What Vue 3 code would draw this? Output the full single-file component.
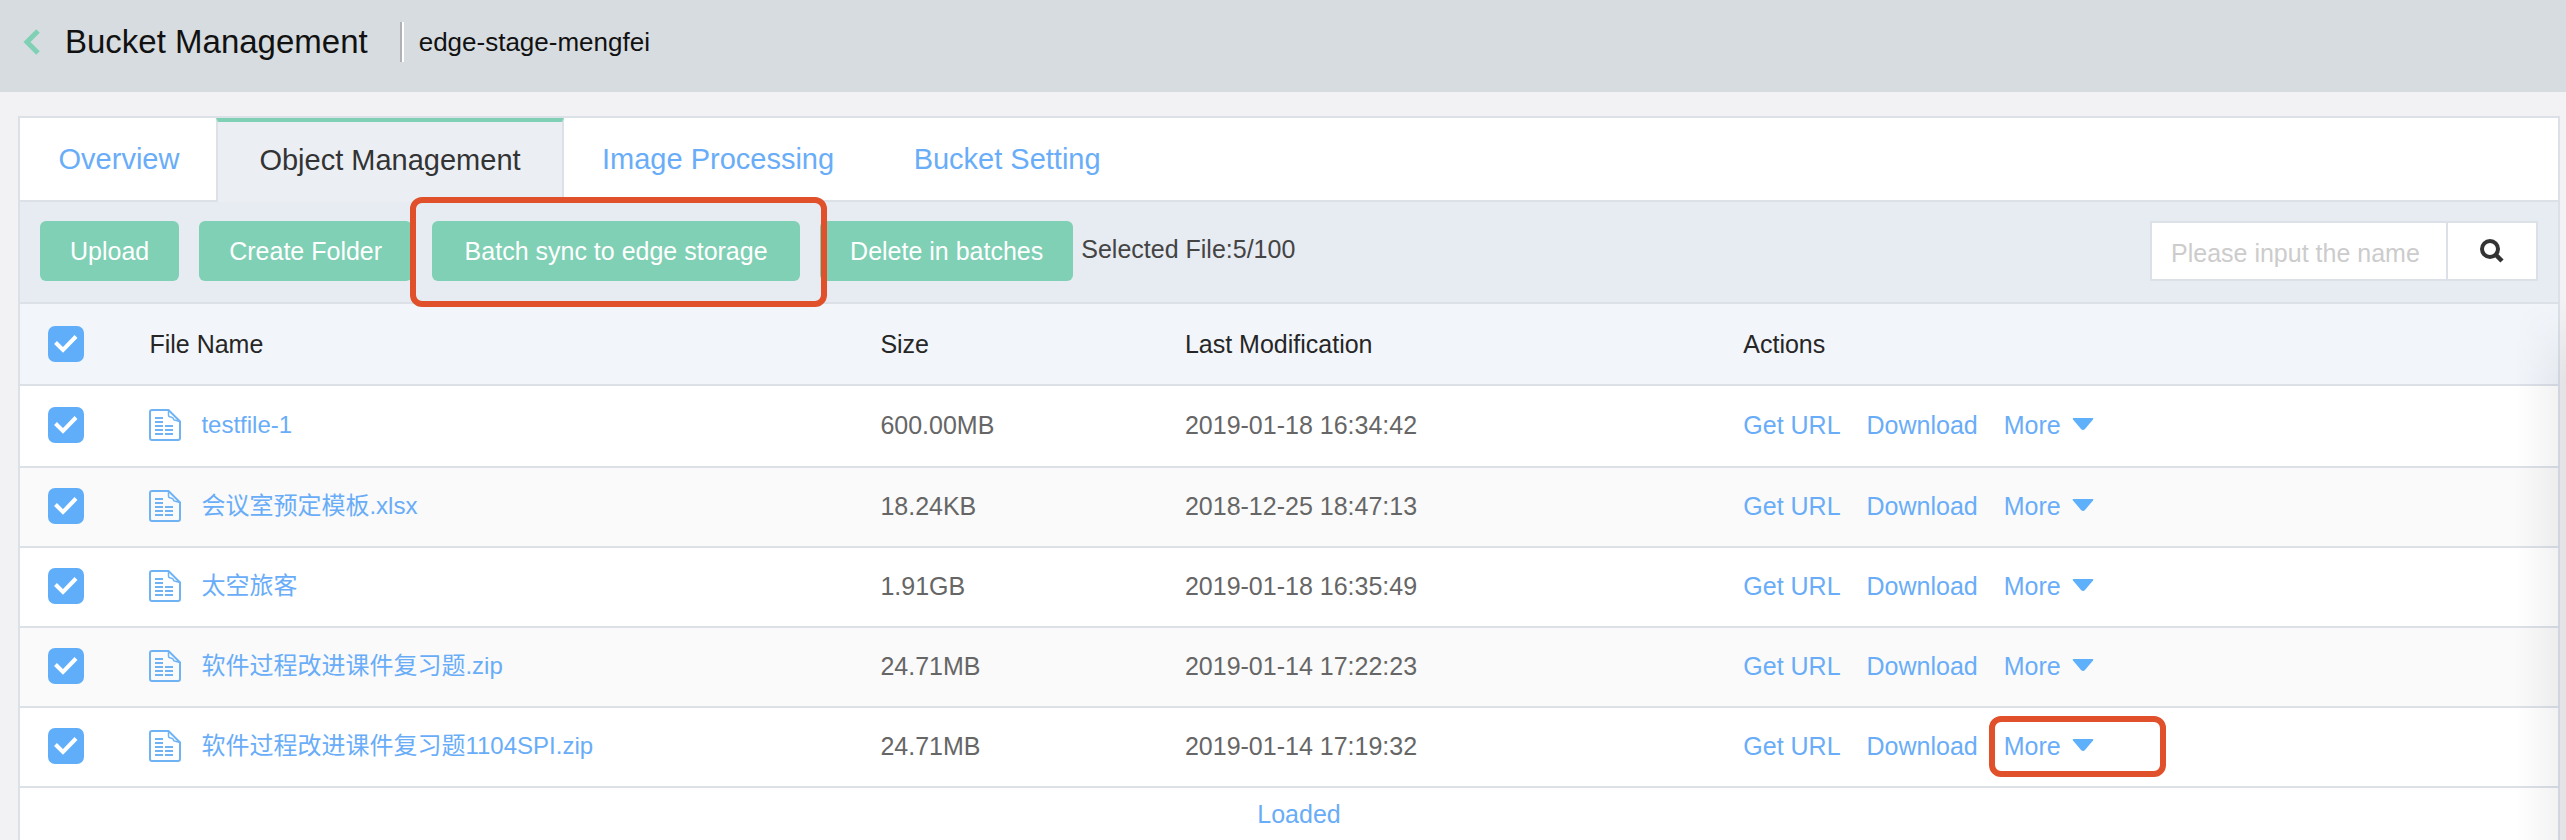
<script setup>
import { ref, computed } from 'vue'

const tabs = [
  { label: 'Overview', size: 'short' },
  { label: 'Object Management', size: 'long', active: true },
  { label: 'Image Processing', size: 'medium' },
  { label: 'Bucket Setting', size: 'medium' }
]

const files = ref([
  { name: 'testfile-1', size: '600.00MB', modified: '2019-01-18 16:34:42', checked: true },
  { name: '会议室预定模板.xlsx', size: '18.24KB', modified: '2018-12-25 18:47:13', checked: true },
  { name: '太空旅客', size: '1.91GB', modified: '2019-01-18 16:35:49', checked: true },
  { name: '软件过程改进课件复习题.zip', size: '24.71MB', modified: '2019-01-14 17:22:23', checked: true },
  { name: '软件过程改进课件复习题1104SPI.zip', size: '24.71MB', modified: '2019-01-14 17:19:32', checked: true, marked: true }
])

const keyword = ref('')
const selectedCount = computed(() => files.value.filter((f) => f.checked).length)
const allChecked = computed({
  get: () => files.value.every((f) => f.checked),
  set: (value) => files.value.forEach((f) => { f.checked = value })
})
</script>

<template>
  <div class="page">
    <header class="header">
      <a class="back" href="#" aria-label="Back">
        <svg width="18" height="26" viewBox="0 0 18 26" fill="none">
          <path d="M15 2 L4 13 L15 24" stroke="#7fd0b5" stroke-width="5" />
        </svg>
      </a>
      <h1 class="title">Bucket Management</h1>
      <span class="divider"></span>
      <span class="bucket">edge-stage-mengfei</span>
    </header>

    <main class="panel">
      <nav class="tabs">
        <a
          v-for="tab in tabs"
          :key="tab.label"
          href="#"
          class="tab"
          :class="[tab.size, { active: tab.active }]"
        >{{ tab.label }}</a>
      </nav>

      <div class="toolbar">
        <button type="button" class="btn">Upload</button>
        <button type="button" class="btn">Create Folder</button>
        <div class="marked-action">
          <button type="button" class="btn wide">Batch sync to edge storage</button>
          <span class="mark mark-button"></span>
        </div>
        <button type="button" class="btn">Delete in batches</button>
        <span class="selected">Selected File:{{ selectedCount }}/100</span>
        <form class="search" @submit.prevent>
          <input v-model="keyword" type="text" aria-label="File name" placeholder="Please input the name" />
          <button type="submit" aria-label="Search">
            <svg width="24" height="24" viewBox="0 0 24 24" fill="none" stroke="#333">
              <circle cx="10" cy="10" r="8" stroke-width="4" />
              <path d="M15.5 15.5 L22 22" stroke-width="4.5" />
            </svg>
          </button>
        </form>
      </div>

      <table class="files">
        <colgroup>
          <col class="col-check" />
          <col class="col-name" />
          <col class="col-size" />
          <col class="col-date" />
          <col />
        </colgroup>
        <thead>
          <tr>
            <th class="check-cell">
              <label class="check">
                <input v-model="allChecked" type="checkbox" aria-label="Select all files" />
                <svg viewBox="0 0 36 36" fill="none"><path d="M7.5 16.5 L15 24 L28 10.5" stroke="#fff" stroke-width="4" /></svg>
              </label>
            </th>
            <th>File Name</th>
            <th>Size</th>
            <th>Last Modification</th>
            <th>Actions</th>
          </tr>
        </thead>
        <tbody>
          <tr v-for="file in files" :key="file.name">
            <td class="check-cell">
              <label class="check">
                <input v-model="file.checked" type="checkbox" :aria-label="'Select ' + file.name" />
                <svg viewBox="0 0 36 36" fill="none"><path d="M7.5 16.5 L15 24 L28 10.5" stroke="#fff" stroke-width="4" /></svg>
              </label>
            </td>
            <td>
              <a class="file" href="#">
                <svg width="32" height="32" viewBox="0 0 32 32" fill="none" stroke="#6fb3f5" stroke-width="2">
                  <path d="M19.5 1 H3 Q1 1 1 3 V29 Q1 31 3 31 H29 Q31 31 31 29 V12.5 Z" />
                  <path d="M19.5 1.5 V6 Q19.5 8 22 8 Q24.5 8.5 25 11 L31 12.5" stroke-width="1.5" />
                  <path d="M6 9 H14 M6 13 H14 M6 17 H14 M6 21 H14 M6 25 H14 M16 17 H24 M16 21 H24 M16 25 H24" />
                </svg>
                <span>{{ file.name }}</span>
              </a>
            </td>
            <td>{{ file.size }}</td>
            <td>{{ file.modified }}</td>
            <td>
              <div class="actions">
                <a href="#">Get URL</a>
                <a href="#">Download</a>
                <a href="#" class="more">
                  More
                  <svg width="22" height="14" viewBox="0 0 22 14">
                    <path d="M1.5 0 H20.5 Q22 0 21 1.5 L13 11 Q11 13 9 11 L1 1.5 Q0 0 1.5 0 Z" fill="#5fb0fb" />
                  </svg>
                  <span v-if="file.marked" class="mark mark-more"></span>
                </a>
              </div>
            </td>
          </tr>
        </tbody>
      </table>

      <p class="loaded">Loaded</p>
    </main>
    <div class="edge-shade"></div>
  </div>
</template>

<style>
body {
  margin: 0;
  background: #f2f2f4;
}
</style>

<style scoped>
.page {
  position: relative;
  display: flex;
  flex-direction: column;
  min-height: 100vh;
  overflow: hidden;
  font-family: "Liberation Sans", "Noto Sans CJK SC", sans-serif;
  font-size: 25px;
  line-height: 36px;
  color: #666;
}

.page * {
  box-sizing: border-box;
}

a {
  color: #69adf8;
  text-decoration: none;
}

button,
input {
  font: inherit;
}

.header {
  display: flex;
  align-items: center;
  height: 92px;
  padding: 0 23px 8px;
  background: #d7dce0;
  color: #111;
}

.back {
  display: flex;
  margin-right: 24px;
}

.title {
  margin: 0;
  font-size: 33px;
  font-weight: 400;
}

.divider {
  width: 4px;
  height: 40px;
  margin: 0 15px 0 32px;
  border-left: 2px solid #aeb2b6;
  background: #fff;
}

.bucket {
  font-size: 26px;
}

.panel {
  flex: 1;
  margin: 24px 6px 0 18px;
  border: 2px solid #dce1e8;
  border-bottom: 0;
  background: #fff;
}

.tabs {
  display: flex;
  height: 84px;
  border-bottom: 2px solid #dce1e8;
  font-size: 29px;
}

.tab {
  display: flex;
  align-items: center;
  justify-content: center;
  padding: 0 38px;
}

.tab.short {
  width: 196px;
  padding: 0 36px 0 38px;
}

.tab.long {
  width: 348px;
  padding-bottom: 4px;
}

.tab.medium {
  min-width: 270px;
}

.tab.active {
  height: 84px;
  border: 2px solid #dce1e8;
  border-top: 4px solid #7fd0b5;
  border-bottom: 0;
  background: #ebeff4;
  color: #333;
}

.toolbar {
  display: flex;
  align-items: center;
  gap: 20px;
  height: 102px;
  padding: 0 20px 2px;
  border-bottom: 2px solid #dce1e8;
  background: #e7ebf2;
}

.btn {
  height: 60px;
  padding: 0 30px;
  border: 0;
  border-radius: 6px;
  background: #7fd0b5;
  color: #fff;
  white-space: nowrap;
}

.btn.wide {
  min-width: 368px;
}

.marked-action {
  position: relative;
  display: flex;
}

.mark {
  position: absolute;
  border: 6px solid #e0502b;
  border-radius: 12px;
  pointer-events: none;
}

.mark-button {
  inset: -24px -27px -26px -22px;
}

.selected {
  margin-left: -12px;
  padding-bottom: 4px;
  color: #444;
  white-space: nowrap;
}

.search {
  display: flex;
  width: 388px;
  height: 60px;
  margin-left: auto;
  border: 2px solid #dce1e8;
  background: #fff;
}

.search input {
  flex: 1;
  min-width: 0;
  padding: 4px 0 0 19px;
  border: 0;
  outline: 0;
  background: transparent;
  color: #333;
}

.search input::placeholder {
  color: #ccc;
  opacity: 1;
}

.search button {
  display: flex;
  align-items: center;
  justify-content: center;
  width: 90px;
  padding: 0;
  border: 0;
  border-left: 2px solid #dce1e8;
  background: #fff;
}

.files {
  width: 100%;
  border-collapse: separate;
  border-spacing: 0;
  table-layout: fixed;
}

.col-check {
  width: 5.1%;
}

.col-name {
  width: 28.8%;
}

.col-size {
  width: 12%;
}

.col-date {
  width: 22%;
}

.files th,
.files td {
  height: 80px;
  padding: 0 0 2px;
  border-bottom: 2px solid #dce1e8;
  text-align: left;
  vertical-align: middle;
}

.files th,
.files tbody tr:first-child td {
  height: 82px;
}

.files th {
  padding: 0;
  background: #f2f5fa;
  color: #262626;
  font-weight: 400;
}

.files .check-cell {
  padding-left: 28px;
}

.files tbody tr:nth-child(even) {
  background: #fafafa;
}

.check {
  position: relative;
  display: block;
  width: 36px;
  height: 36px;
}

.check input {
  display: block;
  width: 36px;
  height: 36px;
  margin: 0;
  border: 2px solid #60aefa;
  border-radius: 7px;
  appearance: none;
  background: #fff;
}

.check input:checked {
  background: #60aefa;
}

.check svg {
  position: absolute;
  inset: 0;
  pointer-events: none;
}

.file {
  display: flex;
  align-items: center;
  gap: 20px;
}

.file span {
  font-size: 24px;
}

.actions {
  display: flex;
  gap: 26px;
}

.more {
  position: relative;
  display: flex;
  align-items: center;
  gap: 11px;
}

.mark-more {
  top: -12px;
  left: -15px;
  width: 177px;
  height: 61px;
}

.loaded {
  margin: 0;
  padding: 8px 0 0 20px;
  color: #69adf8;
  text-align: center;
}

.edge-shade {
  position: absolute;
  top: 300px;
  right: 0;
  bottom: 0;
  width: 50px;
  background: linear-gradient(to right, transparent, rgba(40, 40, 60, 0.07));
  mask-image: linear-gradient(to bottom, transparent, #000 80px);
  pointer-events: none;
}
</style>
